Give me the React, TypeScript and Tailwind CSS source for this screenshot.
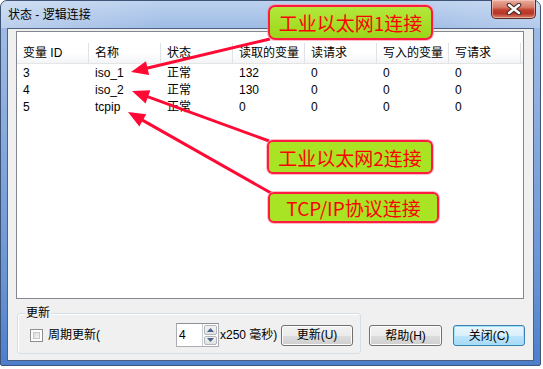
import React from "react";

const cols = ["变量 ID", "名称", "状态", "读取的变量", "读请求", "写入的变量", "写请求"];

const rows = [
  ["3", "iso_1", "正常", "132", "0", "0", "0"],
  ["4", "iso_2", "正常", "130", "0", "0", "0"],
  ["5", "tcpip", "正常", "0", "0", "0", "0"],
];

// red arrow: tail (x1,y1) -> tip (x2,y2)
function Arrow({ x1, y1, x2, y2 }: { x1: number; y1: number; x2: number; y2: number }) {
  const dx = x2 - x1;
  const dy = y2 - y1;
  const len = Math.hypot(dx, dy);
  const ux = dx / len;
  const uy = dy / len;
  const hl = 17;
  const hw = 7;
  const bx = x2 - ux * hl;
  const by = y2 - uy * hl;
  const pts = `${x2},${y2} ${bx - uy * hw},${by + ux * hw} ${bx + uy * hw},${by - ux * hw}`;
  return (
    <g>
      <line x1={x1} y1={y1} x2={bx + ux * 2} y2={by + uy * 2} stroke="#ff0a35" strokeWidth={3} />
      <polygon points={pts} fill="#ff0a35" />
    </g>
  );
}

function WinButton({ label, def, w }: { label: string; def?: boolean; w: string }) {
  return (
    <div
      className={`${w} h-[21px] rounded-[3px] border flex items-center justify-center text-[12px] text-black ${
        def
          ? "border-[#3c7fb1] bg-[linear-gradient(180deg,#eaf6fd_0%,#d9f0fc_50%,#bee6fd_50%,#a7d9f5_100%)] shadow-[inset_0_0_0_1px_#9fe3fb]"
          : "border-[#707070] bg-[linear-gradient(180deg,#f2f2f2_0%,#ebebeb_50%,#dddddd_50%,#cfcfcf_100%)] shadow-[inset_0_0_0_1px_#fcfcfc]"
      }`}
    >
      {label}
    </div>
  );
}

export default function App() {
  return (
    <div className="relative w-[543px] h-[369px] bg-white font-['Liberation_Sans','Noto_Sans_CJK_SC',sans-serif] text-[12px] text-black overflow-hidden">
      {/* window frame */}
      <div className="w-[541px] h-[366px] rounded-t-[7px] rounded-b-[2px] border border-[#3e5476] bg-[linear-gradient(180deg,#bcd1ee_0px,#9ebbe5_28px,#86a9dd_140px,#6894d4_280px,#4d7ecb_366px)] flex flex-col">
        {/* title bar */}
        <div className="h-[27px] flex items-start bg-[linear-gradient(90deg,rgba(255,255,255,0.3)_0%,rgba(255,255,255,0)_30%,rgba(255,255,255,0)_75%,rgba(255,255,255,0.22)_100%)] rounded-t-[6px]">
          <div className="flex-1 pl-[7px] pt-[6px] text-[12px] leading-[16px] text-black">状态 - 逻辑连接</div>
          <div className="mr-[4px] w-[45px] h-[19px] -mt-[1px] rounded-b-[5px] border border-[#5a2a24] border-t-0 bg-[linear-gradient(180deg,#e9ad9f_0%,#d77b68_40%,#c1412f_55%,#b8372a_75%,#d6826a_100%)] shadow-[inset_0_0_0_1px_rgba(255,220,210,0.5)] flex items-center justify-center">
            <svg width="16" height="12" viewBox="0 0 16 12">
              <path d="M3 2 L13 10 M13 2 L3 10" stroke="#3b2522" strokeWidth="4.5" strokeLinecap="round" />
              <path d="M3 2 L13 10 M13 2 L3 10" stroke="#ffffff" strokeWidth="2.5" strokeLinecap="round" />
            </svg>
          </div>
        </div>

        {/* client area */}
        <div className="mx-[6px] mb-[4px] flex-1 border border-[#4c6080] bg-[#f0f0f0] flex flex-col">
          {/* list view */}
          <div className="mt-[2px] ml-[8px] w-[508px] h-[268px] border border-[#828790] bg-white pt-[11px]">
            <div className="flex h-[21px] border-b border-[#e5e5e5] bg-[linear-gradient(180deg,#ffffff_0%,#ffffff_50%,#f3f4f6_100%)]">
              {cols.map((c) => (
                <div key={c} className="w-[72px] shrink-0 border-r border-[#dfe2e6] pl-[6px] flex items-center leading-[14px]">
                  {c}
                </div>
              ))}
              <div className="flex-1" />
            </div>
            {rows.map((r) => (
              <div key={r[0]} className="flex h-[17px] items-center">
                {r.map((v, i) => (
                  <div key={i} className="w-[72px] shrink-0 pl-[6px] leading-[14px]">
                    {v}
                  </div>
                ))}
              </div>
            ))}
          </div>

          {/* bottom row */}
          <div className="mt-[14px] flex items-start">
            <div className="relative ml-[9px] w-[344px] h-[41px] rounded-[3px] border border-[#d5dfe5] shadow-[inset_1px_1px_0_#ffffff] flex items-center pt-[3px]">
              <div className="absolute -top-[9px] left-[7px] px-[1px] bg-[#f0f0f0] leading-[16px]">更新</div>
              <div className="ml-[12px] w-[13px] h-[13px] border border-[#8f8f8f] bg-white p-[2px]">
                <div className="w-full h-full border border-[#c6c6c6] bg-[linear-gradient(135deg,#dcdcdc,#f6f6f6)]" />
              </div>
              <div className="ml-[5px] w-[128px] leading-[14px]">周期更新(</div>
              <div className="flex w-[43px] h-[24px] border border-[#abadb3] border-t-[#8d9096] bg-white">
                <div className="flex-1 pl-[2px] flex items-center leading-[14px]">4</div>
                <div className="w-[16px] flex flex-col border-l border-[#c9ccd2] p-[1px] gap-[1px]">
                  <div className="flex-1 rounded-[2px] border border-[#b3b7bd] bg-[linear-gradient(180deg,#f4f4f4,#dfe1e4)] flex items-center justify-center">
                    <svg width="7" height="4" viewBox="0 0 7 4">
                      <path d="M0 4 L3.5 0 L7 4 Z" fill="#4d6185" />
                    </svg>
                  </div>
                  <div className="flex-1 rounded-[2px] border border-[#b3b7bd] bg-[linear-gradient(180deg,#f4f4f4,#dfe1e4)] flex items-center justify-center">
                    <svg width="7" height="4" viewBox="0 0 7 4">
                      <path d="M0 0 L3.5 4 L7 0 Z" fill="#4d6185" />
                    </svg>
                  </div>
                </div>
              </div>
              <div className="ml-[1px] w-[61px] leading-[14px] whitespace-nowrap">x250 毫秒)</div>
              <WinButton label="更新(U)" w="w-[72px]" />
            </div>
            <div className="mt-[12px] ml-[8px]">
              <WinButton label="帮助(H)" w="w-[73px]" />
            </div>
            <div className="mt-[12px] ml-[11px]">
              <WinButton label="关闭(C)" w="w-[72px]" def />
            </div>
          </div>
        </div>
      </div>

      {/* annotation arrows */}
      <svg className="absolute inset-0 pointer-events-none" width="543" height="369" viewBox="0 0 543 369">
        <Arrow x1={270} y1={39} x2={131} y2={72} />
        <Arrow x1={269} y1={141} x2={132} y2={91} />
        <Arrow x1={271} y1={193} x2={128} y2={112} />
      </svg>

      {/* callouts */}
      <div className="absolute left-[268px] top-[5px] w-[165px] h-[35px] rounded-[7px] border-2 border-[#ff1a40] bg-[linear-gradient(180deg,#b3e83a,#9bd61a)] shadow-[0_0_0_1px_rgba(255,140,160,0.6)] flex items-center justify-center text-[19px] text-[#ff0000] font-['Noto_Sans_CJK_SC',sans-serif] leading-none">
        工业以太网1连接
      </div>
      <div className="absolute left-[267px] top-[140px] w-[166px] h-[34px] rounded-[6px] border-2 border-[#ff1a40] bg-[#a9e424] shadow-[0_0_0_1px_rgba(255,140,160,0.6)] flex items-center justify-center text-[19px] text-[#ff0000] font-['Noto_Sans_CJK_SC',sans-serif] leading-none">
        工业以太网2连接
      </div>
      <div className="absolute left-[268px] top-[192px] w-[171px] h-[31px] rounded-[6px] border-2 border-[#ff1a40] bg-[#a9e424] shadow-[0_0_0_1px_rgba(255,140,160,0.6)] flex items-center justify-center text-[19px] text-[#ff0000] font-['Noto_Sans_CJK_SC',sans-serif] leading-none">
        TCP/IP协议连接
      </div>
    </div>
  );
}
